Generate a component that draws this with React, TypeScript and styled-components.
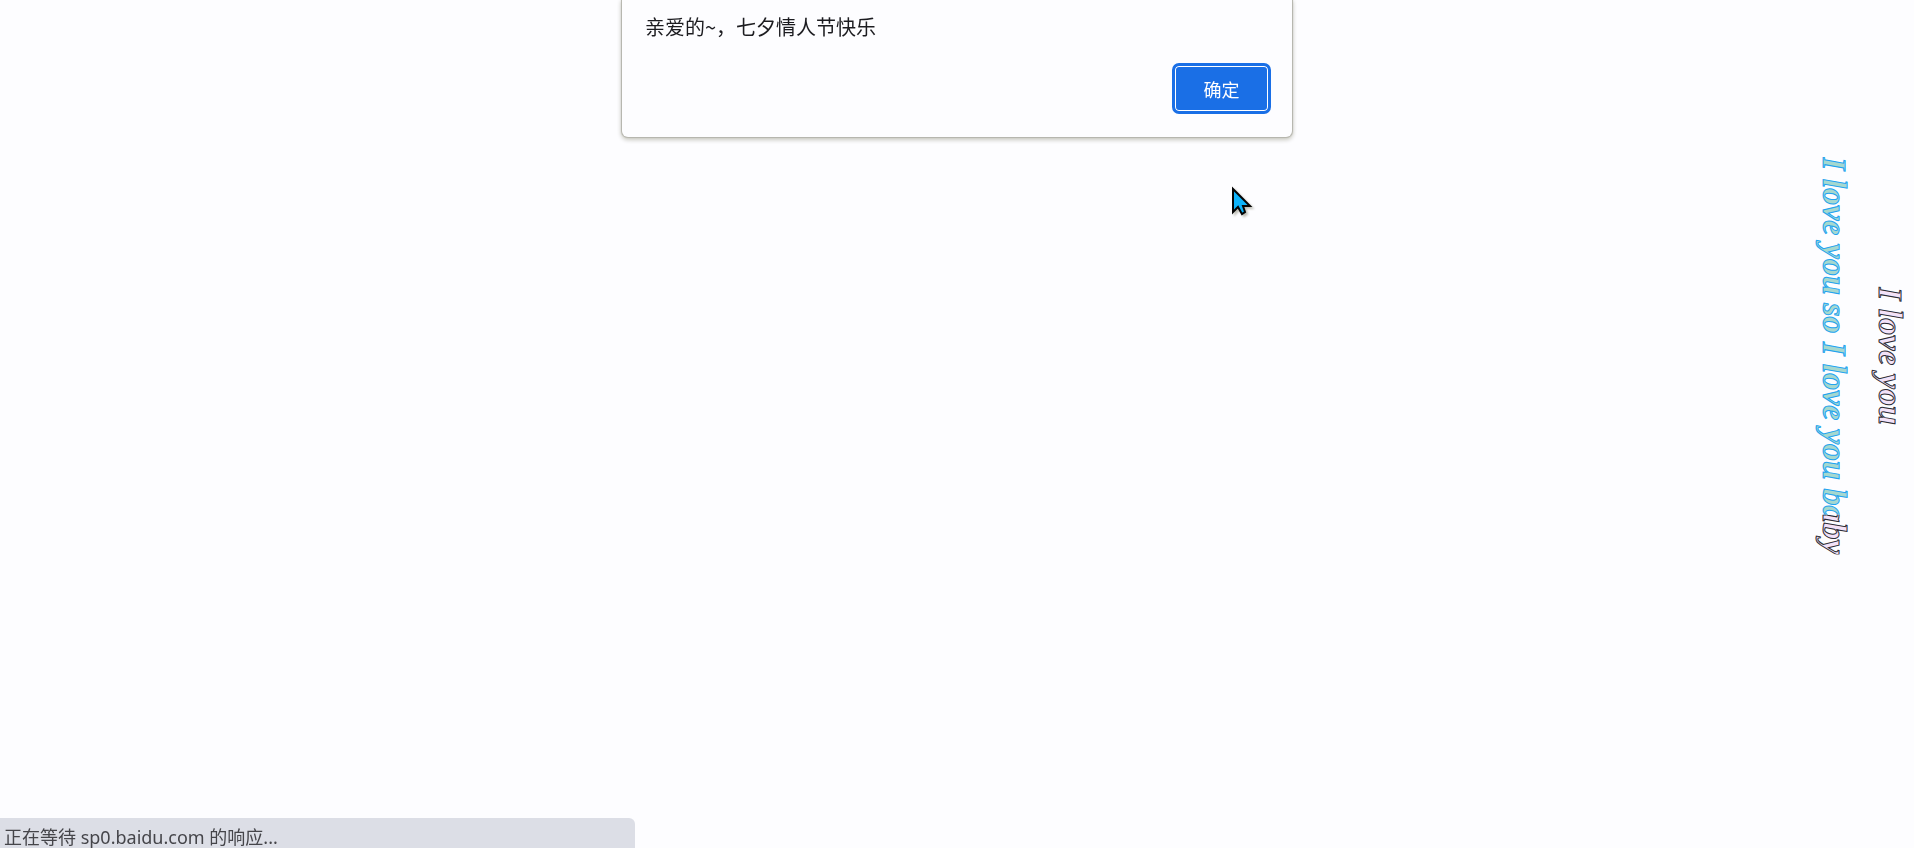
import React from "react";
import styled, { createGlobalStyle } from "styled-components";

const GlobalStyle = createGlobalStyle`
  *, *::before, *::after { box-sizing: border-box; }
  body {
    margin: 0;
    background: #fdfdff;
    font-family: "Noto Sans", "Noto Sans CJK SC", sans-serif;
    overflow: hidden;
  }
`;

const Page = styled.main`
  min-height: 100vh;
  display: flex;
  justify-content: flex-end;
  align-items: flex-start;
  padding-top: 157px;
`;

const Verses = styled.div`
  display: flex;
  align-items: center;
  gap: 8px;
`;

const Verse = styled.p<{ $played: number }>`
  position: relative;
  margin: 0;
  width: 48px;
  writing-mode: vertical-rl;
  white-space: nowrap;
  font: italic bold 34px/48px "Liberation Serif", serif;
  color: #f3e2f8;
  -webkit-text-stroke: 1px #2c2c35;

  span {
    display: block;
    color: #a5d8cf;
    -webkit-text-stroke-color: #22a4f0;
    clip-path: inset(0 0 ${(p) => 100 - p.$played}% 0);
  }

  &::after {
    content: attr(data-text);
    position: absolute;
    inset: 0;
    clip-path: inset(${(p) => p.$played}% 0 0 0);
  }
`;

const Dialog = styled.section`
  position: fixed;
  top: 0;
  left: 0;
  right: 0;
  margin: 0 auto;
  width: 670px;
  max-width: 100%;
  padding: 12px 21px 23px 23px;
  background: #fdfdff;
  border-radius: 0 0 6px 6px;
  box-shadow: 0 0 1px 1px #b4b4ac, 0 2px 4px 1px #c8c8c0;
`;

const Message = styled.p`
  margin: 0;
  font-family: "Noto Sans CJK SC", sans-serif;
  font-size: 20px;
  line-height: 30px;
  color: #1c1c20;
`;

const Actions = styled.div`
  display: flex;
  justify-content: flex-end;
  margin-top: 21px;
`;

const ConfirmButton = styled.button`
  width: 99px;
  height: 51px;
  padding: 0;
  border: 3px solid #1a6fe6;
  border-radius: 7px;
  background: #1a6fe6;
  box-shadow: inset 0 0 0 1px #fff;
  color: #fff;
  font: 18px/24px "Noto Sans CJK SC", sans-serif;
`;

const Pointer = styled.svg`
  position: fixed;
  top: 186px;
  left: 1231px;
  filter: drop-shadow(2px 2px 1px #bdbdb5);
`;

const StatusBar = styled.footer`
  position: fixed;
  left: 0;
  bottom: 0;
  width: 635px;
  max-width: 100%;
  padding: 8px 4px 0;
  border-radius: 0 6px 0 0;
  background: #dcdee6;
  color: #45454a;
  font-size: 18px;
  line-height: 22px;
  white-space: nowrap;
`;

const verses = [
  { text: "I love you so I love you baby", played: 90 },
  { text: "I love you", played: 0 },
];

export default function App() {
  return (
    <>
      <GlobalStyle />
      <Page>
        <Verses>
          {verses.map((v) => (
            <Verse key={v.text} data-text={v.text} $played={v.played}>
              <span>{v.text}</span>
            </Verse>
          ))}
        </Verses>
      </Page>
      <Dialog role="alertdialog" aria-labelledby="message">
        <Message id="message">亲爱的~，七夕情人节快乐</Message>
        <Actions>
          <ConfirmButton type="button">确定</ConfirmButton>
        </Actions>
      </Dialog>
      <Pointer width="22" height="30" viewBox="0 0 22 30" aria-hidden="true">
        <path
          d="M2 3V26L7 21L11 28L14 26L12 20H19Z"
          fill="#0eb3fa"
          stroke="#050505"
          strokeWidth="2"
        />
      </Pointer>
      <StatusBar role="status">正在等待 sp0.baidu.com 的响应...</StatusBar>
    </>
  );
}
